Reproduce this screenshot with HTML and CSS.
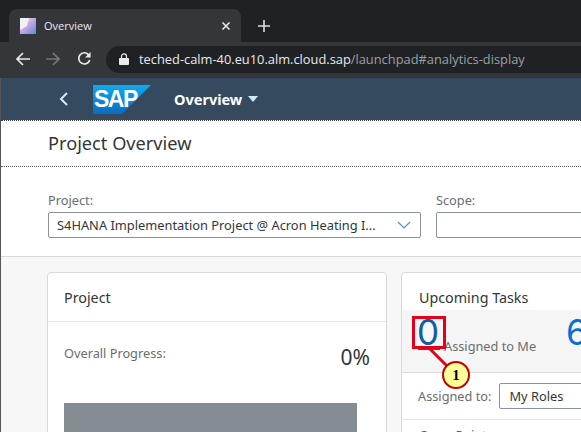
FILE: index.html
```html
<!DOCTYPE html>
<html lang="en">
<head>
    <meta charset="UTF-8">
    <title>Overview</title>
    <link rel="stylesheet" href="styles.css">
</head>
<body>
<div class="tabbar">
    <div class="tab">
        <svg class="favicon" width="16" height="16" viewBox="0 0 16 16">
            <defs>
                <linearGradient id="fav" x1="0" y1="0" x2="1" y2="1">
                    <stop offset="0" stop-color="#e8eef5"/>
                    <stop offset="0.5" stop-color="#c6a4e0"/>
                    <stop offset="1" stop-color="#4f8fd8"/>
                </linearGradient>
            </defs>
            <rect width="16" height="16" fill="url(#fav)"/>
            <path d="M0 0h9L7 8 0 12z" fill="#eef2f6"/>
        </svg>
        <span class="tab-title">Overview</span>
        <svg class="tab-close" width="10" height="10" viewBox="0 0 10 10">
            <path d="M1.5 1.5l7 7M8.5 1.5l-7 7" stroke="#e8eaed" stroke-width="1.6"/>
        </svg>
    </div>
    <svg class="new-tab" width="12" height="12" viewBox="0 0 12 12">
        <path d="M6 0v12M0 6h12" stroke="#dadce0" stroke-width="1.6"/>
    </svg>
</div>

<div class="toolbar">
    <svg class="nav-icon" width="15" height="14" viewBox="0 0 15 14">
        <path d="M15 7H2M8 1L2 7l6 6" fill="none" stroke="#e8eaed" stroke-width="1.7"/>
    </svg>
    <svg class="nav-icon" width="15" height="14" viewBox="0 0 15 14">
        <path d="M0 7h13M7 1l6 6-6 6" fill="none" stroke="#74777b" stroke-width="1.7"/>
    </svg>
    <svg class="nav-icon" width="15" height="15" viewBox="0 0 16 16">
        <path d="M13.6 9.6A6 6 0 1 1 12.3 3.8" fill="none" stroke="#e8eaed" stroke-width="1.8"/>
        <path d="M14.5 1v6h-6z" fill="#e8eaed"/>
    </svg>
    <div class="urlbar">
        <svg class="lock" width="10" height="12" viewBox="0 0 10 12">
            <path d="M2.5 5V3.4a2.5 2.5 0 0 1 5 0V5" fill="none" stroke="#e8eaed" stroke-width="1.2"/>
            <rect y="5" width="10" height="7" rx="1" fill="#e8eaed"/>
        </svg>
        <span class="url-host">teched-calm-40.eu10.alm.cloud.sap</span><span class="url-path">/launchpad#analytics-display</span>
    </div>
</div>

<div class="page">
    <div class="shell">
        <svg class="shell-back" width="10" height="16" viewBox="0 0 10 16">
            <path d="M8 2L2 8l6 6" fill="none" stroke="#d1e8ff" stroke-width="2"/>
        </svg>
        <div class="logo">
            <svg width="58" height="29" viewBox="0 0 58 29">
                <defs>
                    <linearGradient id="sapblue" x1="0" y1="0" x2="0" y2="1">
                        <stop offset="0" stop-color="#0faaee"/>
                        <stop offset="1" stop-color="#0a6cbc"/>
                    </linearGradient>
                </defs>
                <path d="M0 0h58L29 29H0z" fill="url(#sapblue)"/>
            </svg>
            <span class="logo-text">SAP</span>
        </div>
        <span class="shell-title">Overview</span>
        <span class="shell-caret"></span>
    </div>

    <div class="header">
        <div class="title-row">
            <h1>Project Overview</h1>
        </div>
        <div class="filters">
            <div class="filter">
                <label>Project:</label>
                <div class="select project-select">
                    <span class="select-value">S4HANA Implementation Project @ Acron Heating I...</span>
                    <svg width="14" height="8" viewBox="0 0 14 8">
                        <path d="M1 1l6 6 6-6" fill="none" stroke="#5b8fc7" stroke-width="1.2"/>
                    </svg>
                </div>
            </div>
            <div class="filter scope">
                <label>Scope:</label>
                <div class="select scope-select"></div>
            </div>
        </div>
    </div>

    <div class="content">
        <section class="card project-card">
            <div class="card-head">Project</div>
            <div class="progress-row">
                <span class="progress-label">Overall Progress:</span>
                <span class="progress-value">0%</span>
            </div>
            <div class="progress-bar"></div>
        </section>

        <section class="card tasks-card">
            <div class="tasks-head">Upcoming Tasks</div>
            <div class="tasks-band">
                <span class="big-num dark">0</span>
                <span class="num-bar"></span>
                <span class="band-label">Assigned to Me</span>
                <span class="big-num second">6</span>
            </div>
            <div class="assign-row">
                <span class="assign-label">Assigned to:</span>
                <div class="select roles-select">My Roles</div>
            </div>
            <div class="open-link">Open Points</div>
        </section>
    </div>

    <div class="marker-box"></div>
    <svg class="marker-line" width="40" height="40" viewBox="0 0 40 40">
        <path d="M2 2l30 30" stroke="#e2001a" stroke-width="3"/>
    </svg>
    <div class="marker-dot">1</div>
</div>
</body>
</html>
```

FILE: styles.css
```css
* {
    box-sizing: border-box;
}

html, body {
    margin: 0;
    height: 432px;
    overflow: hidden;
}

body {
    font-family: "Noto Sans", "Open Sans", sans-serif;
    background-color: #f7f7f7;
    color: #32363a;
}

/* browser chrome */
.tabbar {
    height: 42px;
    background-color: #202124;
    display: flex;
    align-items: flex-end;
    padding-left: 9px;
}

.tab {
    width: 232px;
    height: 33px;
    background-color: #35363a;
    border-radius: 8px 8px 0 0;
    display: flex;
    align-items: center;
    padding: 0 10px 0 11px;
    color: #e8eaed;
    font-family: "Open Sans", sans-serif;
    font-size: 11px;
}

.favicon {
    flex: none;
    margin-right: 8px;
}

.tab-title {
    flex: 1;
}

.new-tab {
    margin: 0 0 10px 17px;
}

.toolbar {
    height: 36px;
    background-color: #35363a;
    display: flex;
    padding: 4px 0 5px 15px;
    align-items: center;
}

.nav-icon {
    flex: none;
    margin: 0 16px 2px 0;
}

.urlbar {
    flex: 1;
    height: 27px;
    background-color: #202124;
    border-radius: 14px 0 0 14px;
    margin-left: -2px;
    display: flex;
    align-items: center;
    padding: 0 0 2px 13px;
    font-family: "Open Sans", sans-serif;
    font-size: 12.85px;
    white-space: nowrap;
}

.lock {
    flex: none;
    margin-right: 10px;
}

.url-host {
    color: #e8eaed;
}

.url-path {
    color: #9aa0a6;
}

/* page */
.page {
    position: relative;
    height: 354px;
    border-left: 1px solid #555;
}

.shell {
    height: 42px;
    background-color: #354a5f;
    display: flex;
    align-items: center;
    padding-left: 58px;
}

.shell-back {
    margin-right: 24px;
}

.logo {
    position: relative;
    width: 58px;
    height: 29px;
    margin-right: 23px;
}

.logo svg {
    display: block;
}

.logo-text {
    position: absolute;
    left: 1px;
    top: 0;
    color: #fff;
    font-family: "Liberation Sans", sans-serif;
    font-size: 23px;
    line-height: 28px;
    font-weight: bold;
    letter-spacing: -1.5px;
}

.shell-title {
    color: #fff;
    font-size: 14.5px;
    font-weight: 700;
}

.shell-caret {
    margin-left: 6px;
    border-left: 5px solid transparent;
    border-right: 5px solid transparent;
    border-top: 6px solid #d1e8ff;
}

.header {
    background-color: #fff;
    height: 137px;
    border-top: 1px dotted #333;
    border-bottom: 1px solid #d9d9d9;
}

.title-row {
    height: 46px;
    border-bottom: 1px dotted #555;
    padding: 0 0 2px 47px;
    display: flex;
    align-items: center;
}

h1 {
    margin: 0;
    font-size: 18.2px;
    font-weight: 400;
}

.filters {
    display: flex;
    padding: 25px 0 0 47px;
}

.filter label {
    display: block;
    font-size: 12.75px;
    color: #6a6d70;
    line-height: 16px;
    margin-bottom: 4px;
}

.scope {
    margin-left: 15px;
}

.select {
    height: 26px;
    background-color: #fff;
    border: 1px solid #89919a;
    border-radius: 2px;
    font-size: 12.85px;
    display: flex;
    align-items: center;
    white-space: nowrap;
}

.project-select {
    width: 373px;
    padding: 0 9px 0 8px;
    justify-content: space-between;
}

.scope-select {
    width: 200px;
}

.content {
    display: flex;
    padding: 15px 0 0 46px;
    gap: 14px;
}

.card {
    flex: none;
    height: 200px;
    background-color: #fff;
    border: 1px solid #d9d9d9;
    border-radius: 4px;
}

.project-card {
    width: 340px;
}

.card-head {
    height: 49px;
    border-bottom: 1px solid #e5e5e5;
    padding-left: 16px;
    font-size: 14.3px;
    line-height: 50px;
}

.progress-row {
    display: flex;
    justify-content: space-between;
    padding: 22px 16px 0 16px;
    height: 81px;
}

.progress-label {
    font-size: 12.75px;
    color: #6a6d70;
}

.progress-value {
    font-size: 21px;
    line-height: 28px;
    margin-top: -1px;
}

.progress-bar {
    margin-left: 16px;
    width: 293px;
    height: 40px;
    background-color: #848e92;
}

.tasks-card {
    width: 300px;
}

.tasks-head {
    height: 37px;
    padding-left: 17px;
    font-size: 14.3px;
    line-height: 49px;
}

.tasks-band {
    height: 63px;
    background-color: #f5f5f5;
    border-bottom: 1px solid #d9d9d9;
    position: relative;
}

.big-num {
    position: absolute;
    top: 0;
    font-family: "Inter", sans-serif;
    font-size: 35px;
    line-height: 44px;
    color: #0a6ed1;
}

.big-num.dark {
    left: 15px;
    color: #0b5ea8;
}

.num-bar {
    position: absolute;
    left: 16px;
    top: 36px;
    width: 22px;
    height: 4px;
    background-color: #0b5ea8;
}

.big-num.second {
    left: 164px;
}

.band-label {
    position: absolute;
    left: 42px;
    top: 27px;
    font-size: 12.75px;
    color: #6a6d70;
}

.assign-row {
    height: 47px;
    border-bottom: 1px solid #e5e5e5;
    display: flex;
    align-items: center;
    padding-left: 16px;
}

.assign-label {
    font-size: 12.75px;
    color: #6a6d70;
    margin-right: 8px;
}

.roles-select {
    width: 120px;
    padding-left: 9px;
}

.open-link {
    padding: 6px 0 0 17px;
    font-size: 12.85px;
    color: #0a6ed1;
}

/* annotation on top of the page */
.marker-box {
    position: absolute;
    left: 411px;
    top: 238px;
    width: 34px;
    height: 33px;
    border: 3px solid #e2001a;
}

.marker-line {
    position: absolute;
    left: 426px;
    top: 268px;
}

.marker-dot {
    position: absolute;
    left: 441px;
    top: 283px;
    width: 28px;
    height: 28px;
    border-radius: 50%;
    background-color: #ffff99;
    border: 2px solid #c00000;
    font-family: "Liberation Serif", serif;
    font-size: 15px;
    font-weight: bold;
    color: #000;
    display: flex;
    align-items: center;
    justify-content: center;
}
```
